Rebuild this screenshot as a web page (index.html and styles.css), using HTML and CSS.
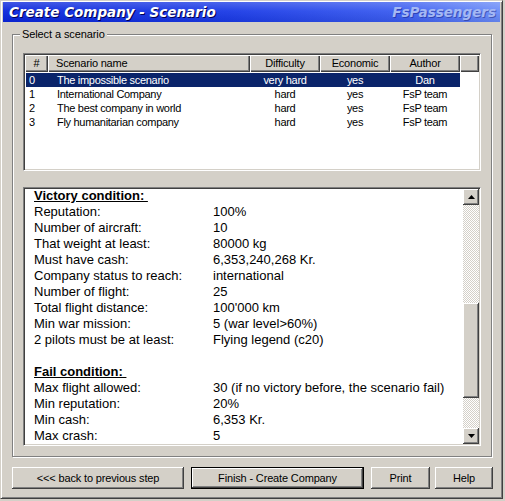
FILE: index.html
```html
<!DOCTYPE html>
<html>
<head>
<meta charset="utf-8">
<title>Create Company - Scenario</title>
<link rel="stylesheet" href="styles.css">
</head>
<body>
<div class="window">
  <div class="titlebar">
    <span class="title">Create Company - Scenario</span>
    <span class="brand">FsPassengers</span>
  </div>
  <div class="group">
    <span class="group-label">Select a scenario</span>
    <div class="listview sunken">
      <div class="lv-header">
        <div class="hc c-num">#</div>
        <div class="hc c-name">Scenario name</div>
        <div class="hc c-diff">Difficulty</div>
        <div class="hc c-econ">Economic</div>
        <div class="hc c-auth">Author</div>
        <div class="hc c-fill"></div>
      </div>
      <div class="lv-body">
        <div class="lv-row selected">
          <div class="c-num">0</div><div class="c-name">The impossible scenario</div><div class="c-diff">very hard</div><div class="c-econ">yes</div><div class="c-auth">Dan</div>
        </div>
        <div class="lv-row">
          <div class="c-num">1</div><div class="c-name">International Company</div><div class="c-diff">hard</div><div class="c-econ">yes</div><div class="c-auth">FsP team</div>
        </div>
        <div class="lv-row">
          <div class="c-num">2</div><div class="c-name">The best company in world</div><div class="c-diff">hard</div><div class="c-econ">yes</div><div class="c-auth">FsP team</div>
        </div>
        <div class="lv-row">
          <div class="c-num">3</div><div class="c-name">Fly humanitarian company</div><div class="c-diff">hard</div><div class="c-econ">yes</div><div class="c-auth">FsP team</div>
        </div>
      </div>
    </div>
    <div class="infobox sunken">
      <div class="info-text">
        <div class="info-lines">
          <div class="heading"><span>Victory condition:&nbsp;</span></div>
          <div class="line"><span class="k">Reputation:</span><span class="v">100%</span></div>
          <div class="line"><span class="k">Number of aircraft:</span><span class="v">10</span></div>
          <div class="line"><span class="k">That weight at least:</span><span class="v">80000 kg</span></div>
          <div class="line"><span class="k">Must have cash:</span><span class="v">6,353,240,268 Kr.</span></div>
          <div class="line"><span class="k">Company status to reach:</span><span class="v">international</span></div>
          <div class="line"><span class="k">Number of flight:</span><span class="v">25</span></div>
          <div class="line"><span class="k">Total flight distance:</span><span class="v">100'000 km</span></div>
          <div class="line"><span class="k">Min war mission:</span><span class="v">5 (war level&gt;60%)</span></div>
          <div class="line"><span class="k">2 pilots must be at least:</span><span class="v">Flying legend (c20)</span></div>
          <div class="line blank"></div>
          <div class="heading"><span>Fail condition:&nbsp;</span></div>
          <div class="line"><span class="k">Max flight allowed:</span><span class="v">30 (if no victory before, the scenario fail)</span></div>
          <div class="line"><span class="k">Min reputation:</span><span class="v">20%</span></div>
          <div class="line"><span class="k">Min cash:</span><span class="v">6,353 Kr.</span></div>
          <div class="line"><span class="k">Max crash:</span><span class="v">5</span></div>
        </div>
      </div>
      <div class="scrollbar">
        <div class="sb-btn raised"><svg width="7" height="4" viewBox="0 0 7 4"><path d="M3.5 0 L7 4 L0 4 Z" fill="#000"/></svg></div>
        <div class="sb-track"><div class="sb-thumb raised"></div></div>
        <div class="sb-btn raised"><svg width="7" height="4" viewBox="0 0 7 4"><path d="M0 0 L7 0 L3.5 4 Z" fill="#000"/></svg></div>
      </div>
    </div>
  </div>
  <div class="buttons">
    <div class="btn raised b-back">&lt;&lt;&lt; back to previous step</div>
    <div class="btn-default b-finish"><div class="btn raised">Finish - Create Company</div></div>
    <div class="btn raised b-print">Print</div>
    <div class="btn raised b-help">Help</div>
  </div>
</div>
</body>
</html>
```
FILE: styles.css
```css
* { box-sizing: border-box; }
html, body { margin: 0; padding: 0; background: #d4d0c8; }
body {
  font-family: "Liberation Sans", Arial, sans-serif;
  font-size: 11px;
  color: #000;
  width: 505px;
  height: 501px;
  overflow: hidden;
}
.window {
  width: 503px;
  height: 499px;
  border: 1px solid;
  border-color: #d4d0c8 #404040 #404040 #d4d0c8;
  box-shadow: inset 1px 1px 0 #fff, inset -1px -1px 0 #808080;
  padding: 1px 2px 2px 2px;
  display: flex;
  flex-direction: column;
}
.titlebar {
  height: 20px;
  flex: none;
  display: flex;
  justify-content: space-between;
  align-items: center;
  padding: 0 4px 0 6px;
  background:
    linear-gradient(to bottom, rgba(255,255,255,0.22), rgba(255,255,255,0.05) 45%, rgba(0,0,40,0.08)),
    linear-gradient(to right, #0a26dc 0%, #1a3ae6 45%, #3a5cf0 80%, #6a8cf8 100%);
  font-family: "DejaVu Sans", Verdana, sans-serif;
  font-weight: bold;
  font-style: italic;
  font-size: 13.5px;
}
.title { color: #fff; text-shadow: 1px 1px 0 #000050; }
.brand { color: #a4b8f4; text-shadow: 1px 1px 0 rgba(0,0,80,0.35); }
.group {
  position: relative;
  margin: 12px 0 0 9px;
  width: 480px;
  height: 423px;
  border: 1px solid #808080;
  box-shadow: 1px 1px 0 #fff, inset 1px 1px 0 #fff;
  padding: 18px 10px 10px 10px;
  display: flex;
  flex-direction: column;
}
.group-label {
  position: absolute;
  top: -7px;
  left: 7px;
  padding: 0 2px;
  background: #d4d0c8;
  line-height: 13px;
  letter-spacing: -0.1px;
}
.sunken {
  border: 1px solid;
  border-color: #808080 #fff #fff #808080;
  box-shadow: inset 1px 1px 0 #404040, inset -1px -1px 0 #d4d0c8;
  padding: 1px;
  background: #fff;
}
.raised {
  background: #d4d0c8;
  box-shadow: inset -1px -1px 0 #404040, inset 1px 1px 0 #fff, inset -2px -2px 0 #808080;
}
.listview { height: 118px; flex: none; overflow: hidden; }
.lv-header { display: flex; height: 17px; }
.hc {
  background: #d4d0c8;
  box-shadow: inset 1px 1px 0 #fff, inset -1px -1px 0 #404040, inset -2px -2px 0 #808080;
  line-height: 16px;
  text-align: center;
  white-space: nowrap;
  letter-spacing: -0.2px;
}
.lv-header .c-num { width: 23px; }
.lv-header .c-name { width: 202px; text-align: left; padding-left: 8px; }
.lv-header .c-diff, .lv-header .c-econ, .lv-header .c-auth { width: 70px; }
.lv-header .c-fill { flex: 1; }
.lv-body { padding-top: 1px; }
.lv-row { display: flex; height: 14px; line-height: 14px; margin-left: 1px; width: 434px; white-space: nowrap; letter-spacing: -0.3px; }
.lv-row.selected { background: #0a246a; color: #fff; }
.lv-row .c-num { width: 22px; padding-left: 3px; }
.lv-row .c-name { width: 202px; padding-left: 9px; }
.lv-row .c-diff, .lv-row .c-econ, .lv-row .c-auth { width: 70px; text-align: center; }
.listview + .infobox { margin-top: 16px; }
.infobox { flex: 1; display: flex; overflow: hidden; }
.info-text { flex: 1; overflow: hidden; padding-left: 9px; }
.info-lines { margin-top: -1px; font-size: 13px; line-height: 16px; }
.line { display: flex; height: 16px; white-space: nowrap; }
.line .k { width: 179px; flex: none; }
.heading { height: 16px; font-weight: bold; }
.heading span { text-decoration: underline; }
.scrollbar { width: 16px; flex: none; display: flex; flex-direction: column; }
.sb-btn { height: 16px; flex: none; display: flex; align-items: center; justify-content: center; }
.sb-track {
  flex: 1;
  background: repeating-conic-gradient(#fff 0 25%, #d4d0c8 0 50%) 0 0 / 2px 2px;
}
.sb-thumb { margin-top: 98px; height: 95px; }
.buttons { display: flex; margin: 10px 0 0 9px; height: 22px; }
.btn { height: 22px; display: flex; align-items: center; justify-content: center; white-space: nowrap; letter-spacing: -0.15px; }
.b-back { width: 172px; }
.btn-default { width: 173px; margin-left: 7px; border: 1px solid #000; }
.btn-default .btn { height: 20px; }
.b-print { width: 59px; margin-left: 7px; }
.b-help { width: 58px; margin-left: 5px; }
```
